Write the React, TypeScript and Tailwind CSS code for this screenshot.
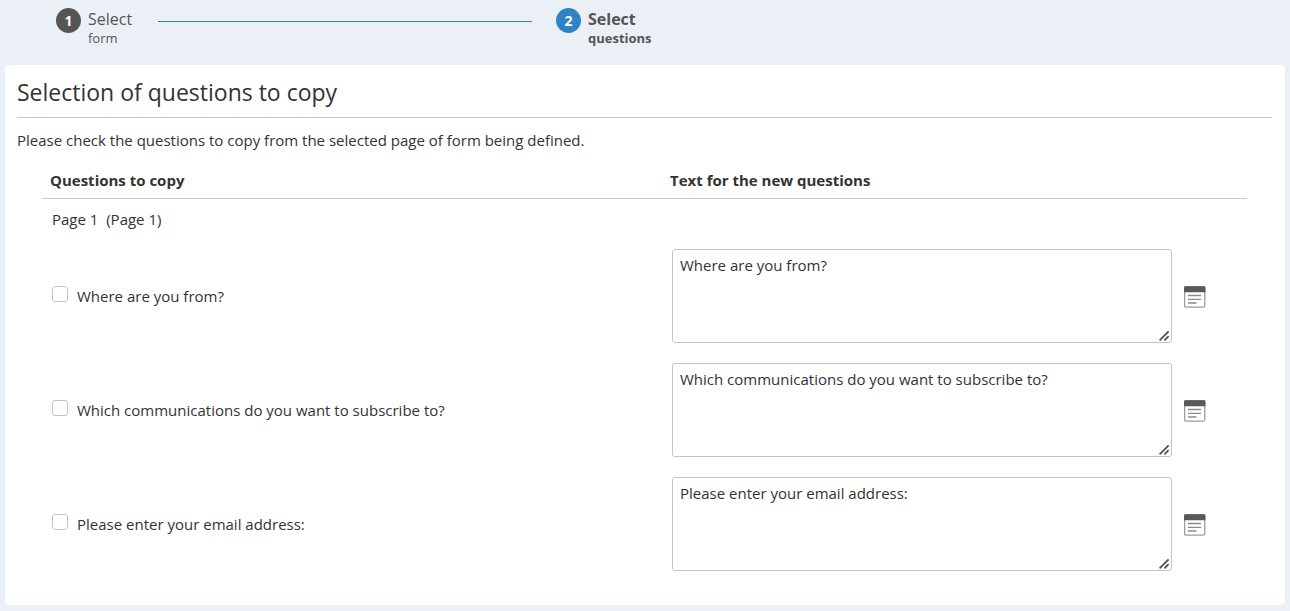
import { useState } from "react";

const initialQuestions = [
  "Where are you from?",
  "Which communications do you want to subscribe to?",
  "Please enter your email address:",
];

function EditorIcon() {
  return (
    <svg width="22" height="22" viewBox="0 0 22 22" fill="none" aria-hidden="true">
      <rect x="0.6" y="0.7" width="20.2" height="20.4" rx="1.5" fill="#fff" stroke="#9c9c9c" strokeWidth="1.3" />
      <path d="M0 6.2V1.5Q0 0.3 1.3 0.3H20.2Q21.4 0.3 21.4 1.5V6.2Z" fill="#595959" />
      <path d="M4 9.5H17M4 13.4H17M4 17H12.5" stroke="#8c8c8c" strokeWidth="1.3" />
    </svg>
  );
}

function Grip() {
  return (
    <svg
      className="pointer-events-none absolute right-0.5 bottom-px"
      width="11"
      height="11"
      viewBox="0 0 11 11"
      aria-hidden="true"
    >
      <path d="M0.6 9.4L9.6 0.4M5.4 9.4L9.6 5.2" stroke="#4d4d4d" strokeWidth="1.8" fill="none" />
    </svg>
  );
}

function Step({ number, title, subtitle, active }: { number: number; title: string; subtitle: string; active?: boolean }) {
  return (
    <div className={active ? "flex gap-[7px] font-bold" : "flex gap-[7px]"}>
      <span
        className={
          active
            ? "flex size-[25px] items-center justify-center rounded-full bg-[#2f83c3] text-[14px] font-bold text-white"
            : "flex size-[25px] items-center justify-center rounded-full bg-[#555] text-[14px] font-bold text-white"
        }
      >
        {number}
      </span>
      <span className="flex flex-col">
        <span className="text-[16px] leading-[22px]">{title}</span>
        <span className="text-[13px] leading-4">{subtitle}</span>
      </span>
    </div>
  );
}

export default function App() {
  const [texts, setTexts] = useState(initialQuestions);

  return (
    <div className="min-h-screen bg-[#ebf0f7] px-[5px] pb-1.5 font-['Open_Sans',sans-serif] text-[15px] leading-5 text-[#333]">
      <ol className="flex h-[65px] items-start pt-2 pl-[51px] text-[#555]">
        <li className="flex w-[500px] items-start gap-[26px] pr-6">
          <Step number={1} title="Select" subtitle="form" />
          <span className="mt-[13px] h-px flex-1 bg-[#2c82be]" />
        </li>
        <li aria-current="step">
          <Step number={2} title="Select" subtitle="questions" active />
        </li>
      </ol>

      <main className="rounded-[4px] bg-white pr-[13px] pb-6 pl-3">
        <h1 className="border-b border-[#c8c8c8] pt-[11px] pb-[9px] text-[23px] leading-8">
          Selection of questions to copy
        </h1>
        <p className="pt-3 pb-5">Please check the questions to copy from the selected page of form being defined.</p>

        <div className="px-[25px]">
          <table className="w-full table-fixed border-collapse text-left">
            <thead>
              <tr className="border-b border-[#c8c8c8]">
                <th className="w-[620px] pb-2 pl-2 font-bold">Questions to copy</th>
                <th className="pb-2 pl-2 font-bold">Text for the new questions</th>
              </tr>
            </thead>
            <tbody>
              <tr>
                <td colSpan={2} className="h-10 pl-2.5 whitespace-pre">
                  {"Page 1  (Page 1)"}
                </td>
              </tr>
              {initialQuestions.map((question, i) => (
                <tr key={question}>
                  <td className="py-2.5 pl-2.5 align-middle">
                    <label className="flex items-start gap-[9px]">
                      <input
                        type="checkbox"
                        className="size-4 appearance-none rounded-[3px] border border-[#c4c4c4] bg-white checked:border-[#2f83c3] checked:bg-[#2f83c3]"
                      />
                      <span>{question}</span>
                    </label>
                  </td>
                  <td className="py-2.5 pl-2.5">
                    <div className="flex items-center gap-3">
                      <div className="relative h-[94px] w-[500px]">
                        <textarea
                          aria-label={`New text for: ${question}`}
                          value={texts[i]}
                          onChange={(e) => setTexts(texts.map((t, j) => (j === i ? e.target.value : t)))}
                          className="block size-full resize-none rounded-[3px] border border-[#c4c4c4] bg-white px-[7px] py-[5px]"
                        />
                        <Grip />
                      </div>
                      <button type="button" aria-label="Open text editor" className="pt-0.5">
                        <EditorIcon />
                      </button>
                    </div>
                  </td>
                </tr>
              ))}
            </tbody>
          </table>
        </div>
      </main>
    </div>
  );
}
